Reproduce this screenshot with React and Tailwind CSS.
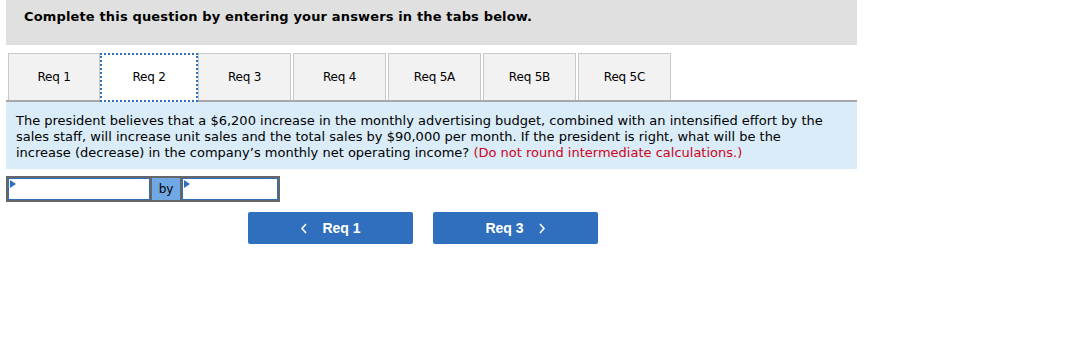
import React from "react";

const tabs = ["Req 1", "Req 2", "Req 3", "Req 4", "Req 5A", "Req 5B", "Req 5C"];

function Marker() {
  return (
    <svg className="absolute left-[2px] top-[2px]" width="6" height="8" viewBox="0 0 6 8">
      <polygon points="0,0 6,4 0,8" fill="#2f6fbd" />
    </svg>
  );
}

export default function App() {
  return (
    <div className="w-[1085px] h-[362px] bg-white font-['DejaVu_Sans',Verdana,sans-serif] text-black">
      <div className="ml-[6px] w-[851px]">
        <div className="h-[45px] bg-[#e0e0e0] pl-[18px] pt-[7px] text-[13px] font-bold tracking-[0.15px]">
          Complete this question by entering your answers in the tabs below.
        </div>
        <div className="mt-[8px] flex items-end border-b-2 border-[#a8a8a8] pl-[2px]">
          {tabs.map((t, i) =>
            i === 1 ? (
              <div
                key={t}
                className="-mb-[2px] flex h-[49px] w-[98px] items-center justify-center border-2 border-dotted border-[#2f6fbd] bg-white pb-[2px] text-[12px] tracking-[-0.2px]"
              >
                {t}
              </div>
            ) : (
              <div
                key={t}
                className={
                  "flex h-[47px] items-center justify-center border border-b-0 border-[#c8c8c8] bg-[#f2f2f2] text-[12px] tracking-[-0.2px] " +
                  (i === 0 ? "w-[92px]" : "w-[93px] mr-[2px]")
                }
              >
                {t}
              </div>
            )
          )}
        </div>
        <div className="h-[67px] bg-[#d9ecf8] pl-[10px] pt-[11px] text-[13px] leading-[16px]">
          The president believes that a $6,200 increase in the monthly advertising budget, combined with an intensified effort by the
          <br />
          sales staff, will increase unit sales and the total sales by $90,000 per month. If the president is right, what will be the
          <br />
          increase (decrease) in the company’s monthly net operating income?{" "}
          <span className="text-[#d0021b]">(Do not round intermediate calculations.)</span>
        </div>
        <div className="mt-[7px] flex h-[26px]">
          <div className="relative h-[26px] w-[146px] border-2 border-[#676767] bg-white shadow-[inset_0_0_0_1px_#2f6fbd]">
            <Marker />
          </div>
          <div className="flex h-[26px] w-[28px] items-center justify-center border-y-2 border-[#676767] bg-[#6fa8e4] text-[12px]">
            by
          </div>
          <div className="relative h-[26px] w-[100px] border-2 border-[#676767] bg-white shadow-[inset_0_0_0_1px_#2f6fbd]">
            <Marker />
          </div>
        </div>
        <div className="ml-[242px] mt-[10px] flex gap-[20px] font-['Liberation_Sans',Arial,sans-serif]">
          <button className="flex h-[32px] w-[165px] items-center justify-center gap-[14px] rounded-[2px] bg-[#2f6fbd] text-[14px] font-bold text-white">
            <svg width="8" height="11" viewBox="0 0 8 11"><polyline points="6,1 2,5.5 6,10" fill="none" stroke="white" strokeWidth="1.6" /></svg>
            <span>Req 1</span>
          </button>
          <button className="flex h-[32px] w-[165px] items-center justify-center gap-[14px] rounded-[2px] bg-[#2f6fbd] text-[14px] font-bold text-white">
            <span>Req 3</span>
            <svg width="8" height="11" viewBox="0 0 8 11"><polyline points="2,1 6,5.5 2,10" fill="none" stroke="white" strokeWidth="1.6" /></svg>
          </button>
        </div>
      </div>
    </div>
  );
}
